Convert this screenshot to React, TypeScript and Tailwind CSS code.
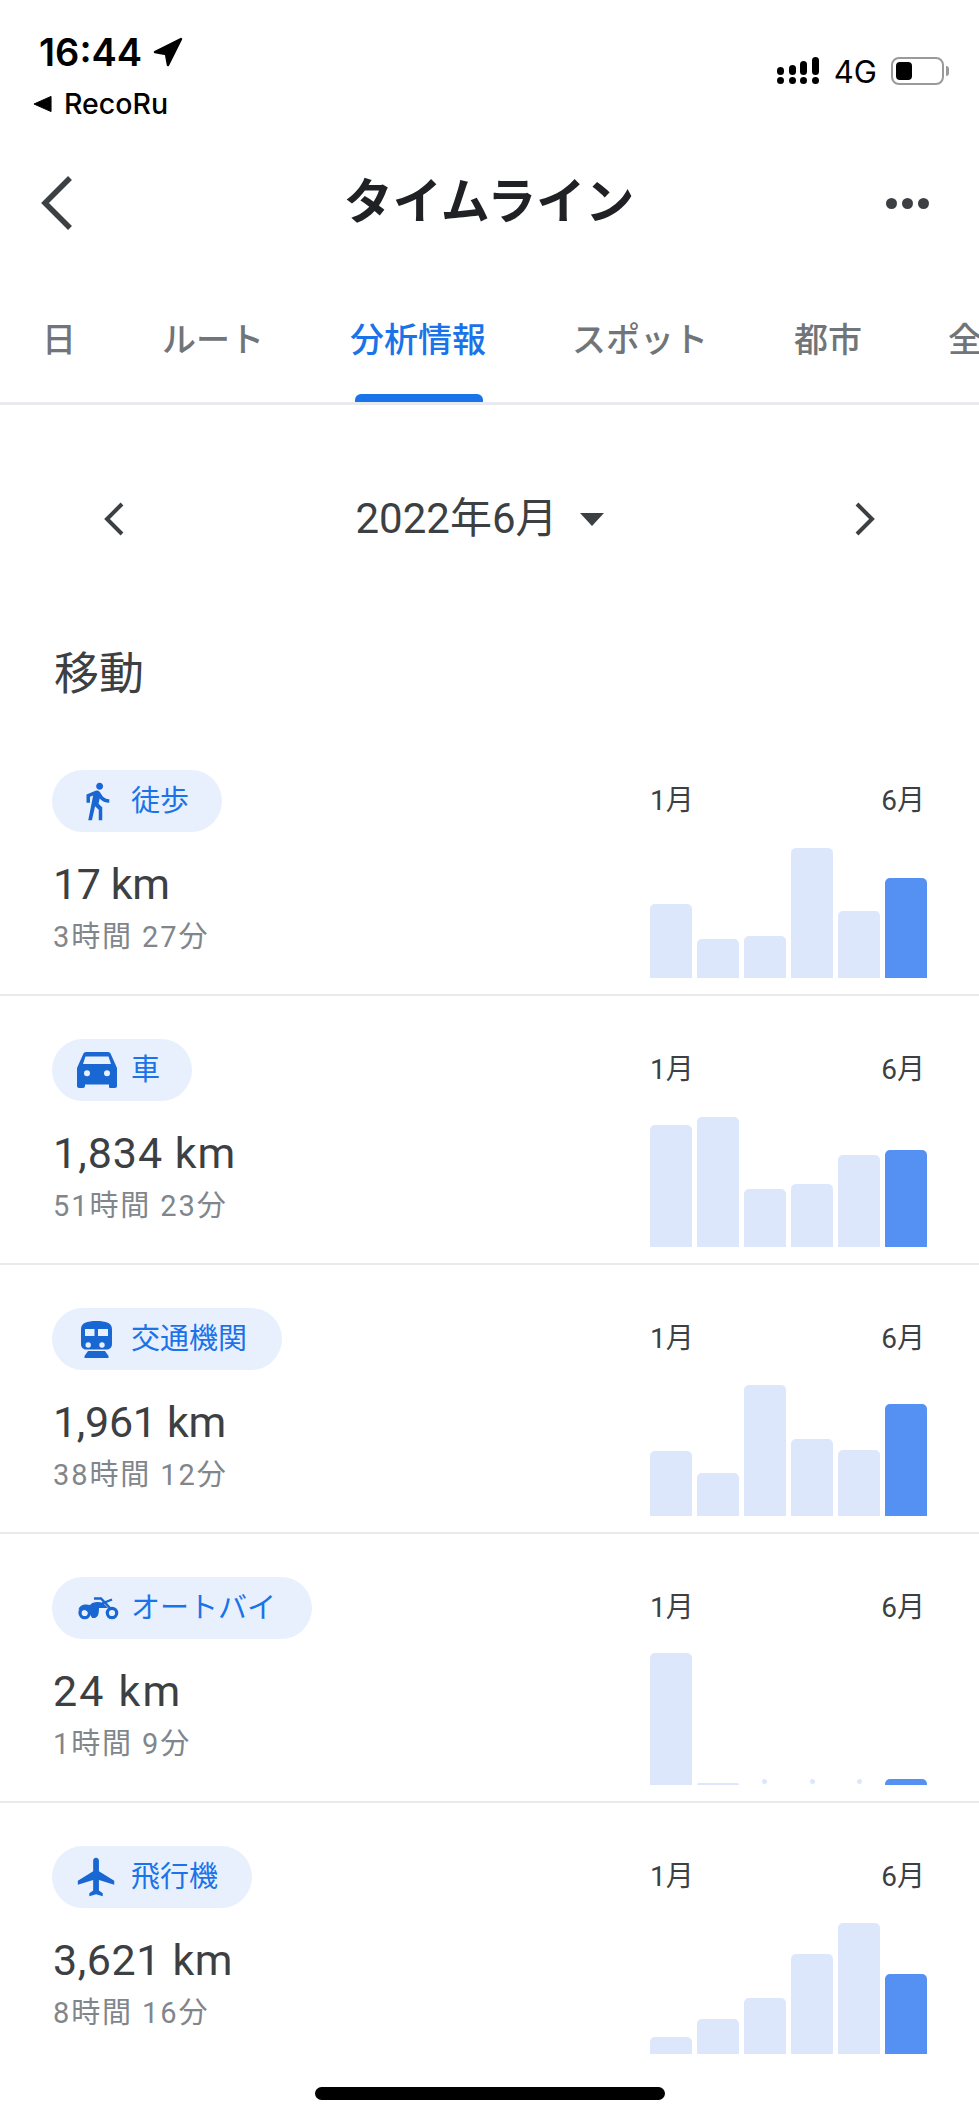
import React from 'react';

const WalkIcon = () => (
    <svg viewBox="0 0 24 24" fill="currentColor" className="w-[42px] h-[42px]">
        <path d="M13.5 5.5c1.1 0 2-.9 2-2s-.9-2-2-2-2 .9-2 2 .9 2 2 2zM9.8 8.9L7 23h2.1l1.8-8 2.1 2v6h2v-7.5l-2.1-2 .6-3C14.8 12 16.8 13 19 13v-2c-1.9 0-3.5-1-4.3-2.4l-1-1.6c-.4-.6-1-1-1.7-1-.3 0-.5.1-.8.1L6 8.3V13h2V9.6l1.8-.7"/>
    </svg>
);

const CarIcon = () => (
    <svg viewBox="0 0 40 36" fill="currentColor" className="w-[40px] h-[36px]">
        <path
            fillRule="evenodd"
            d="M9 0H31C32.5 0 33.5 1 34 2.5L40 16V34C40 35 39 36 38 36H33C32 36 32 35 32 34V32.5H8V34C8 35 7 36 6 36H2C1 36 0 35 0 34V16L6 2.5C6.5 1 7.5 0 9 0ZM8.5 4.5L6 12H34L31.5 4.5ZM7 21.3a3 3 0 1 0 6 0a3 3 0 1 0-6 0ZM27 21.3a3 3 0 1 0 6 0a3 3 0 1 0-6 0Z"
        />
    </svg>
);

const TrainIcon = () => (
    <svg viewBox="0 0 31 37" fill="currentColor" className="w-[31px] h-[37px]">
        <path
            fillRule="evenodd"
            d="M0 8C0 2 6 0 15.5 0S31 2 31 8V23C31 26 29 28.5 26 28.5H5C2 28.5 0 26 0 23ZM4 8V15H13.5V8ZM17 8V15H27V8ZM4.5 24a2.7 2.7 0 1 0 5.4 0a2.7 2.7 0 1 0-5.4 0ZM18.3 24a2.7 2.7 0 1 0 5.4 0a2.7 2.7 0 1 0-5.4 0Z"
        />
        <path d="M7 30H24L27.5 35V37H3.5V35Z"/>
    </svg>
);

const BikeIcon = () => (
    <svg viewBox="12 20 46 28" className="w-[46px] h-[28px]" fill="currentColor" stroke="none">
        <circle cx="22.7" cy="39" r="4.7" fill="none" stroke="currentColor" strokeWidth="3.2"/>
        <circle cx="50" cy="39" r="4.7" fill="none" stroke="currentColor" strokeWidth="3.2"/>
        <path d="M16.5 36C17 31 23 29.5 28 31C30 28 36 27 41 29L46 34L37 34C37 40 36 43 33 44L30 44C28 39 24 35 19 35Z"/>
        <path d="M32 24.5H39L49 35" fill="none" stroke="currentColor" strokeWidth="2.4"/>
        <path d="M40 29.5L50 25.5" fill="none" stroke="currentColor" strokeWidth="2.4"/>
    </svg>
);

const PlaneIcon = () => (
    <svg viewBox="0 0 24 24" fill="currentColor" className="w-[46px] h-[46px]">
        <path d="M21 16v-2l-8-5V3.5c0-.83-.67-1.5-1.5-1.5S10 2.67 10 3.5V9l-8 5v2l8-2.5V19l-2 1.5V22l3.5-1 3.5 1v-1.5L13 19v-5.5l8 2.5z"/>
    </svg>
);

type Row = {
    label: string;
    icon: React.ReactNode;
    pillWidth: string;
    tracking: string;
    distance: string;
    time: string;
    bars: number[];
};

const rows: Row[] = [
    {label: '徒歩', icon: <WalkIcon/>, pillWidth: 'w-[170px]', tracking: 'tracking-[-0.4px]', distance: '17 km', time: '3時間 27分', bars: [74, 39, 42, 130, 67, 100]},
    {label: '車', icon: <CarIcon/>, pillWidth: 'w-[140px]', tracking: 'tracking-[1px]', distance: '1,834 km', time: '51時間 23分', bars: [122, 130, 58, 63, 92, 97]},
    {label: '交通機関', icon: <TrainIcon/>, pillWidth: 'w-[230px]', tracking: 'tracking-[-0.3px]', distance: '1,961 km', time: '38時間 12分', bars: [65, 43, 131, 77, 66, 112]},
    {label: 'オートバイ', icon: <BikeIcon/>, pillWidth: 'w-[260px]', tracking: 'tracking-[2.2px]', distance: '24 km', time: '1時間 9分', bars: [132, 2, 4, 4, 4, 6]},
    {label: '飛行機', icon: <PlaneIcon/>, pillWidth: 'w-[200px]', tracking: 'tracking-[0.6px]', distance: '3,621 km', time: '8時間 16分', bars: [17, 35, 56, 100, 131, 80]},
];

const tabs = ['日', 'ルート', '分析情報', 'スポット', '都市', '全'];

const Chart = ({bars}: { bars: number[] }) => (
    <div className="w-[277px] h-[132px] flex items-end justify-between">
        {bars.map((h, i) => {
            if (h === 4) {
                return (
                    <div key={i} className="w-[41.5px] flex justify-center mb-[1px]">
                        <div className="w-[5px] h-[5px] rounded-full bg-[#dce7fb]"/>
                    </div>
                );
            }
            return (
                <div
                    key={i}
                    className={`w-[41.5px] rounded-t-[5px] ${i === 5 ? 'bg-[#5590f3]' : 'bg-[#dce7fb]'}`}
                    style={{height: h}}
                />
            );
        })}
    </div>
);

const ActivityRow = ({row, last}: { row: Row; last: boolean }) => (
    <div className={`h-[269px] flex justify-between pl-[52px] pr-[52px] pt-[43px] ${last ? '' : 'border-b-2 border-[#e8eaed]'}`}>
        <div>
            <div className={`${row.pillWidth} h-[62px] rounded-full bg-[#e8f0fe] flex items-center`}>
                <div className="w-[79px] shrink-0 flex justify-center text-[#1967d2] pl-[10px]">
                    {row.icon}
                </div>
                <span className="text-[29px] leading-[36px] text-[#1a73e8] whitespace-nowrap">{row.label}</span>
            </div>
            <div className={`mt-[27px] ml-[1px] text-[43px] leading-[50px] text-[#3c4043] ${row.tracking}`}>{row.distance}</div>
            <div className="mt-[10px] ml-[1px] text-[29px] leading-[36px] tracking-[1.9px] text-[#80868b]">{row.time}</div>
        </div>
        <div className="w-[277px]">
            <div className="flex justify-between h-[32px] mt-[15px] items-center pr-[2px] text-[28px] leading-[32px] text-[#3c4043]">
                <span>1月</span>
                <span>6月</span>
            </div>
            <div className="mt-[29px]">
                <Chart bars={row.bars}/>
            </div>
        </div>
    </div>
);

const StatusBar = () => (
    <div className="h-[130px] flex justify-between font-['Inter','Noto_Sans_CJK_JP',sans-serif] text-black">
        <div className="pl-[39px] pt-[29px]">
            <div className="flex items-center h-[46px]">
                <span className="text-[38px] leading-[46px] font-semibold">16:44</span>
                <svg viewBox="0 0 30 30" className="w-[30px] h-[30px] ml-[11px]" fill="currentColor">
                    <path d="M28 2 L2 15 L13 17 L15 28 Z" stroke="currentColor" strokeWidth="2.5" strokeLinejoin="round"/>
                </svg>
            </div>
            <div className="flex items-center mt-[13px] -ml-[6px] h-[32px]">
                <svg viewBox="0 0 20 18" className="w-[19px] h-[18px]" fill="currentColor">
                    <path d="M19 1 L1 9 L19 17 Z" stroke="currentColor" strokeLinejoin="round"/>
                </svg>
                <span className="ml-[12px] text-[28.5px] leading-[32px] font-medium">RecoRu</span>
            </div>
        </div>
        <div className="pr-[30px] pt-[54px] flex items-start">
            <div className="flex flex-col gap-[2px] w-[42px] mt-[3px]">
                <div className="flex justify-between items-end h-[18px]">
                    <div className="w-[7px] h-[8px] rounded-full bg-black"/>
                    <div className="w-[7px] h-[10px] rounded-full bg-black"/>
                    <div className="w-[7px] h-[14px] rounded-full bg-black"/>
                    <div className="w-[7px] h-[18px] rounded-full bg-black"/>
                </div>
                <div className="flex justify-between">
                    <div className="w-[7px] h-[7px] rounded-full bg-black"/>
                    <div className="w-[7px] h-[7px] rounded-full bg-black"/>
                    <div className="w-[7px] h-[7px] rounded-full bg-black"/>
                    <div className="w-[7px] h-[7px] rounded-full bg-black"/>
                </div>
            </div>
            <span className="ml-[15px] text-[31px] leading-[36px]">4G</span>
            <div className="ml-[14px] flex items-center mt-[3px]">
                <div className="w-[53px] h-[28px] rounded-[8px] border-2 border-[#9a9a9a] p-[3px]">
                    <div className="w-[16px] h-full rounded-[4px] bg-black"/>
                </div>
                <div className="w-[3px] h-[10px] ml-[2px] rounded-r-full bg-[#9a9a9a]"/>
            </div>
        </div>
    </div>
);

const App: React.FC = () => {
    return (
        <div className="w-[979px] h-[2119px] relative overflow-hidden bg-white font-[Roboto,'Noto_Sans_CJK_JP',sans-serif]">
            <StatusBar/>

            <div className="h-[146px] flex items-center justify-between pl-[38px] pr-[50px]">
                <svg viewBox="0 0 36 54" className="w-[36px] h-[54px] text-[#3c4043]" fill="none" stroke="currentColor"
                     strokeWidth="5.5">
                    <path d="M32 2 L7 27 L32 52"/>
                </svg>
                <h1 className="text-[49px] leading-[60px] font-semibold text-[#202124] ml-[18px]">タイムライン</h1>
                <div className="flex gap-[5px]">
                    <div className="w-[11px] h-[11px] rounded-full bg-[#3c4043]"/>
                    <div className="w-[11px] h-[11px] rounded-full bg-[#3c4043]"/>
                    <div className="w-[11px] h-[11px] rounded-full bg-[#3c4043]"/>
                </div>
            </div>

            <div className="h-[129px] border-b-[3px] border-[#e8eaed] flex gap-[86px] pl-[42px] pt-[41px] overflow-hidden whitespace-nowrap">
                {tabs.map(t => (
                    <div
                        key={t}
                        className={`relative h-[85px] shrink-0 text-[34px] leading-[46px] font-medium ${t === '分析情報' ? 'text-[#1a73e8]' : 'text-[#70757a]'}`}
                    >
                        {t}
                        {t === '分析情報' && (
                            <div className="absolute left-[5px] bottom-0 w-[128px] h-[8px] rounded-t-[6px] bg-[#1a73e8]"/>
                        )}
                    </div>
                ))}
            </div>

            <div className="h-[228px] flex items-center justify-between pl-[102px] pr-[102px]">
                <svg viewBox="0 0 24 36" className="w-[24px] h-[36px] text-[#3c4043]" fill="none" stroke="currentColor"
                     strokeWidth="4">
                    <path d="M20 3 L5 18 L20 33"/>
                </svg>
                <div className="flex items-center mr-[20px]">
                    <span className="text-[42px] leading-[50px] text-[#3c4043]">2022年6月</span>
                    <div className="ml-[22px] w-0 h-0 border-l-[12px] border-r-[12px] border-t-[13px] border-l-transparent border-r-transparent border-t-[#3c4043]"/>
                </div>
                <svg viewBox="0 0 24 36" className="w-[24px] h-[36px] text-[#3c4043]" fill="none" stroke="currentColor"
                     strokeWidth="4">
                    <path d="M4 3 L19 18 L4 33"/>
                </svg>
            </div>

            <div className="h-[94px] pl-[54px] pt-[12px] text-[45px] leading-[60px] text-[#3c4043]">移動</div>

            {rows.map((row, i) => (
                <ActivityRow key={row.label} row={row} last={i === rows.length - 1}/>
            ))}

            <div className="absolute left-[315px] bottom-[19px] w-[350px] h-[13px] rounded-full bg-black"/>
        </div>
    );
};

export default App;
